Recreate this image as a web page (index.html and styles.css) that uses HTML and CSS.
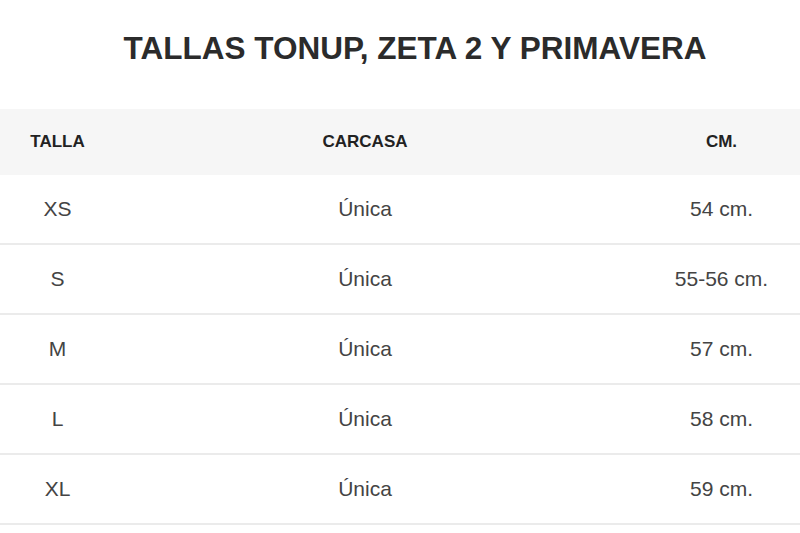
FILE: index.html
```html
<!DOCTYPE html>
<html lang="es">
<head>
<meta charset="utf-8">
<title>Tallas</title>
<link rel="stylesheet" href="styles.css">
</head>
<body>
<main class="page">
  <h1 class="title">TALLAS TONUP, ZETA 2 Y PRIMAVERA</h1>
  <div class="table">
    <div class="row head">
      <div class="cell c1">TALLA</div>
      <div class="cell c2">CARCASA</div>
      <div class="cell c3">CM.</div>
    </div>
    <div class="row">
      <div class="cell c1">XS</div>
      <div class="cell c2">Única</div>
      <div class="cell c3">54 cm.</div>
    </div>
    <div class="row">
      <div class="cell c1">S</div>
      <div class="cell c2">Única</div>
      <div class="cell c3">55-56 cm.</div>
    </div>
    <div class="row">
      <div class="cell c1">M</div>
      <div class="cell c2">Única</div>
      <div class="cell c3">57 cm.</div>
    </div>
    <div class="row">
      <div class="cell c1">L</div>
      <div class="cell c2">Única</div>
      <div class="cell c3">58 cm.</div>
    </div>
    <div class="row">
      <div class="cell c1">XL</div>
      <div class="cell c2">Única</div>
      <div class="cell c3">59 cm.</div>
    </div>
  </div>
</main>
</body>
</html>
```

FILE: styles.css
```css
html, body {
  margin: 0;
  padding: 0;
  background: #ffffff;
}

.page {
  width: 800px;
  font-family: "Liberation Sans", Arial, sans-serif;
}

.title {
  margin: 0;
  padding: 29px 0 0 30px;
  height: 80px;
  line-height: 38px;
  font-size: 31.5px;
  font-weight: bold;
  color: #2b2b2b;
  text-align: center;
  box-sizing: content-box;
}

.table {
  display: flex;
  flex-direction: column;
}

.row {
  display: grid;
  grid-template-columns: 115px 500px 185px;
  align-items: center;
  height: 68px;
  border-bottom: 2px solid #ebebeb;
  font-size: 21px;
  color: #444444;
}

.row.head {
  height: 66px;
  border-bottom: 0;
  background: #f6f6f6;
  font-size: 17px;
  font-weight: bold;
  color: #222222;
}

.cell {
  text-align: center;
}

.c3 {
  padding-left: 28px;
}
```
